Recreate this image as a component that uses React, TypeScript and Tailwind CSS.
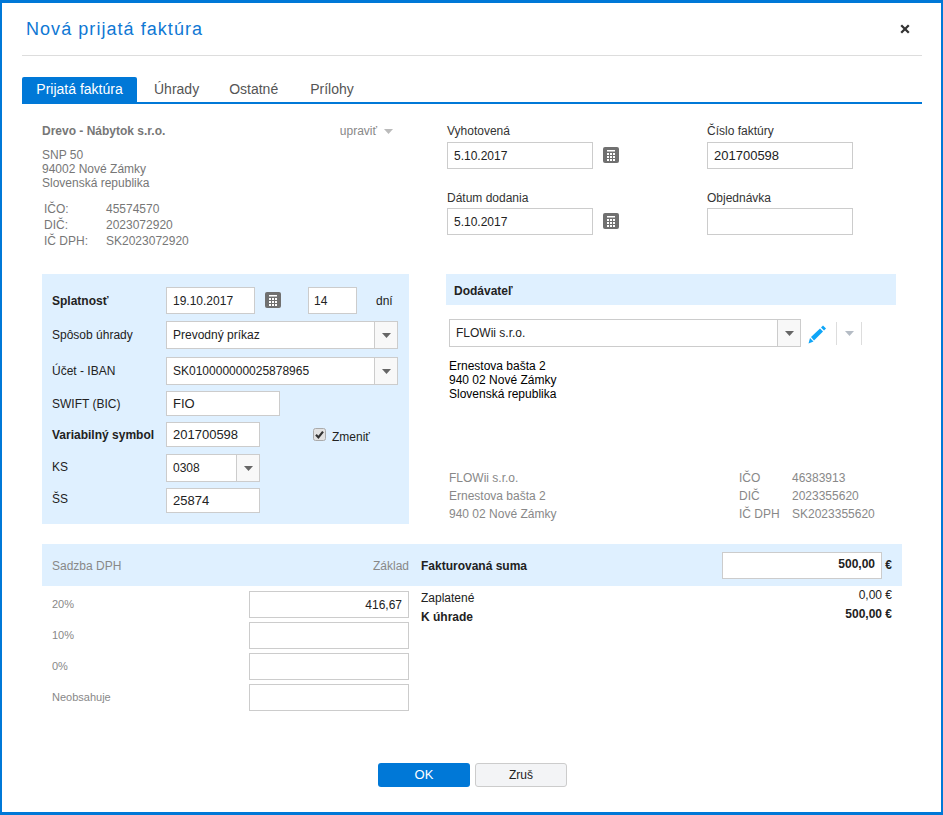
import React from "react";

function Caret({ className = "fill-[#666666]" }: { className?: string }) {
  return (
    <svg width="9" height="5" viewBox="0 0 9 5" className={className}>
      <polygon points="0,0 9,0 4.5,5" />
    </svg>
  );
}

function Calendar() {
  const cells: React.ReactNode[] = [];
  [6, 9, 12].forEach((y) =>
    [4, 7, 10].forEach((x) => cells.push(<rect key={`${x}-${y}`} x={x} y={y} width="2" height="2" fill="#fff" />))
  );
  return (
    <svg width="16" height="16" viewBox="0 0 16 16" className="mb-px block shrink-0">
      <rect width="16" height="16" rx="2" fill="#707070" />
      <rect x="4" y="3" width="8" height="1.5" fill="#fff" />
      {cells}
    </svg>
  );
}

function Field({ className, children }: { className: string; children?: React.ReactNode }) {
  return (
    <div className={`box-border flex shrink-0 items-center border border-[#cccccc] bg-white text-[#222222] ${className}`}>
      {children}
    </div>
  );
}

function Select({ className, arrow, label }: { className: string; arrow: string; label: string }) {
  return (
    <div className={`box-border flex shrink-0 items-stretch border border-[#cccccc] bg-white text-[12px] text-[#222222] ${className}`}>
      <div className="flex flex-1 items-center pl-[6px]">{label}</div>
      <div className={`flex items-center justify-center border-l border-[#cccccc] bg-[#f8f8f8] ${arrow}`}>
        <Caret />
      </div>
    </div>
  );
}

export default function App() {
  return (
    <div className="relative box-border h-[815px] w-[943px] overflow-hidden border-x-2 border-t-[3px] border-b-[3px] border-[#0078d7] bg-white font-[Liberation_Sans,Arial,sans-serif] text-[12px] text-[#333333]">
      <div className="absolute left-[24px] top-[13px] text-[18px] leading-[26px] tracking-[1.05px] text-[#0f78d4]">Nová prijatá faktúra</div>
      <svg width="10" height="10" viewBox="0 0 10 10" className="absolute left-[898px] top-[21px]">
        <path d="M1.2 1.2 8.8 8.8M8.8 1.2 1.2 8.8" stroke="#333333" strokeWidth="2.3" fill="none" />
      </svg>
      <div className="absolute left-[20px] top-[52px] h-px w-[900px] bg-[#dddddd]" />

      {/* Tabs */}
      <div className="absolute left-[20px] top-[74px] box-border flex h-[27px] w-[900px] items-start border-b-2 border-[#0078d7] text-[14px] text-[#555555]">
        <div className="flex h-[25px] w-[115px] items-center justify-center rounded-t-[2px] bg-[#0078d7] text-white">Prijatá faktúra</div>
        <div className="ml-[17px] flex h-[25px] items-center">Úhrady</div>
        <div className="ml-[30px] flex h-[25px] items-center">Ostatné</div>
        <div className="ml-[32px] flex h-[25px] items-center">Prílohy</div>
      </div>

      {/* Own company */}
      <div className="absolute left-[40px] top-[121px] w-[351px] text-[#777777]">
        <div className="flex h-[14px] items-center justify-between leading-[14px]">
          <span className="font-bold">Drevo - Nábytok s.r.o.</span>
          <span className="flex items-center gap-[7px] text-[#888888]">
            upraviť
            <Caret className="fill-[#bbbbbb]" />
          </span>
        </div>
        <div className="mt-[10px] leading-[14px]">
          <div>SNP 50</div>
          <div>94002 Nové Zámky</div>
          <div>Slovenská republika</div>
        </div>
        <div className="ml-[2px] mt-[11px] grid grid-cols-[62px_1fr] leading-[16px]">
          <span>IČO:</span><span>45574570</span>
          <span>DIČ:</span><span>2023072920</span>
          <span>IČ DPH:</span><span>SK2023072920</span>
        </div>
      </div>

      {/* Dates */}
      <div className="absolute left-[445px] top-[121px] grid grid-cols-[260px_146px] grid-rows-[66px_53px]">
        <div>
          <div className="h-[18px] leading-[14px]">Vyhotovená</div>
          <div className="flex items-center gap-[10px]">
            <Field className="h-[27px] w-[146px] pl-[6px]">5.10.2017</Field>
            <Calendar />
          </div>
        </div>
        <div>
          <div className="h-[18px] leading-[14px]">Číslo faktúry</div>
          <Field className="h-[27px] w-[146px] pl-[6px] text-[13px]">201700598</Field>
        </div>
        <div>
          <div className="h-[18px] pt-px leading-[14px]">Dátum dodania</div>
          <div className="flex items-center gap-[10px]">
            <Field className="h-[27px] w-[146px] pl-[6px]">5.10.2017</Field>
            <Calendar />
          </div>
        </div>
        <div>
          <div className="h-[18px] pt-px leading-[14px]">Objednávka</div>
          <Field className="h-[27px] w-[146px]" />
        </div>
      </div>

      {/* Payment panel */}
      <div className="absolute left-[40px] top-[271px] box-border flex h-[250px] w-[367px] flex-col bg-[#dff0ff] pl-[10px] pt-[13px] text-[#222222]">
        <div className="flex h-[27px] items-center">
          <span className="w-[114px] font-bold">Splatnosť</span>
          <Field className="h-[27px] w-[89px] pl-[6px]">19.10.2017</Field>
          <span className="ml-[10px]"><Calendar /></span>
          <Field className="ml-[27px] h-[27px] w-[49px] items-start pl-[5px] pt-[4px]">14</Field>
          <span className="ml-[19px]">dní</span>
        </div>
        <div className="mt-[7px] flex h-[28px] items-center">
          <span className="w-[114px]">Spôsob úhrady</span>
          <Select className="h-[28px] w-[232px]" arrow="w-[23px]" label="Prevodný príkaz" />
        </div>
        <div className="mt-[8px] flex h-[28px] items-center">
          <span className="w-[114px]">Účet - IBAN</span>
          <Select className="h-[28px] w-[232px]" arrow="w-[23px]" label="SK010000000025878965" />
        </div>
        <div className="mt-[6px] flex h-[25px] items-center">
          <span className="w-[114px]">SWIFT (BIC)</span>
          <Field className="h-[25px] w-[114px] pl-[6px] text-[13px]">FIO</Field>
        </div>
        <div className="mt-[6px] flex h-[25px] items-center">
          <span className="w-[114px] font-bold">Variabilný symbol</span>
          <Field className="h-[25px] w-[94px] pl-[6px] text-[13px]">201700598</Field>
          <svg width="13" height="13" viewBox="0 0 13 13" className="ml-[53px] shrink-0">
            <rect x="0.5" y="0.5" width="12" height="12" rx="2" fill="#e2e2e2" stroke="#aaaaaa" />
            <path d="M3 6.8 5.4 9.4 10 3.6" fill="none" stroke="#333333" strokeWidth="2.2" />
          </svg>
          <span className="ml-[6px] mt-[4px]">Zmeniť</span>
        </div>
        <div className="mt-[7px] flex h-[28px] items-center">
          <span className="w-[114px] pb-[3px]">KS</span>
          <Select className="h-[28px] w-[94px]" arrow="w-[23px]" label="0308" />
        </div>
        <div className="mt-[6px] flex h-[25px] items-center">
          <span className="w-[114px] pb-[3px]">ŠS</span>
          <Field className="h-[25px] w-[94px] pl-[6px] text-[13px]">25874</Field>
        </div>
      </div>

      {/* Supplier */}
      <div className="absolute left-[444px] top-[271px] w-[450px]">
        <div className="flex h-[31px] items-center bg-[#dff0ff] pl-[8px] pt-[3px] font-bold text-[#222222]">Dodávateľ</div>
        <div className="ml-[3px] mt-[14px] flex h-[28px] items-center">
          <Select className="h-[28px] w-[352px]" arrow="w-[23px]" label="FLOWii s.r.o." />
          <svg width="18" height="19" viewBox="0 0 18 19" className="ml-[7px] mt-[2px] shrink-0 fill-[#0ea5f7]">
            <polygon points="3,12 12,3.5 15,6.5 6,15.5" />
            <polygon points="0.5,18.5 2,13 5.5,16.5" />
            <polygon points="13,2.5 15,0.5 18,3.5 16,5.5" />
          </svg>
          <div className="ml-[10px] box-border flex h-[23px] w-[26px] items-center justify-center border-x border-[#dddddd]">
            <Caret className="fill-[#b5bcc5]" />
          </div>
        </div>
        <div className="ml-[3px] mt-[12px] leading-[14px] text-black">
          <div>Ernestova bašta 2</div>
          <div>940 02 Nové Zámky</div>
          <div>Slovenská republika</div>
        </div>
        <div className="ml-[3px] mt-[68px] grid grid-cols-[290px_53px_1fr] leading-[18px] text-[#888888]">
          <span>FLOWii s.r.o.</span><span>IČO</span><span>46383913</span>
          <span>Ernestova bašta 2</span><span>DIČ</span><span>2023355620</span>
          <span>940 02 Nové Zámky</span><span>IČ DPH</span><span>SK2023355620</span>
        </div>
      </div>

      {/* VAT bar */}
      <div className="absolute left-[40px] top-[541px] box-border flex h-[42px] w-[860px] items-center bg-[#dff0ff] pl-[10px] pr-[10px]">
        <span className="mt-[1px] w-[357px] text-[#888888]">
          <span className="flex justify-between">
            <span>Sadzba DPH</span>
            <span>Základ</span>
          </span>
        </span>
        <span className="ml-[12px] mt-[1px] w-[301px] font-bold text-[#222222]">Fakturovaná suma</span>
        <Field className="h-[27px] w-[160px] justify-end pb-[3px] pr-[6px] font-bold">500,00</Field>
        <span className="ml-auto font-bold text-[#222222]">€</span>
      </div>

      {/* VAT rows */}
      <div className="absolute left-[50px] top-[588px] grid w-[357px] grid-cols-[197px_160px] gap-y-[4px] text-[11px] text-[#888888]">
        <span className="flex items-center">20%</span>
        <Field className="h-[27px] w-[160px] justify-end pr-[6px] text-[12px]">416,67</Field>
        <span className="flex items-center">10%</span>
        <Field className="h-[27px] w-[160px]" />
        <span className="flex items-center">0%</span>
        <Field className="h-[27px] w-[160px]" />
        <span className="flex items-center">Neobsahuje</span>
        <Field className="h-[27px] w-[160px]" />
      </div>

      {/* Totals */}
      <div className="absolute left-[419px] top-[583px] w-[471px] text-[#222222]">
        <div className="flex h-[19px] justify-between">
          <span className="pt-[3px]">Zaplatené</span>
          <span>0,00 €</span>
        </div>
        <div className="flex h-[19px] justify-between font-bold">
          <span className="pt-[3px]">K úhrade</span>
          <span>500,00 €</span>
        </div>
      </div>

      {/* Buttons */}
      <div className="absolute left-[376px] top-[760px] flex gap-[5px]">
        <div className="flex h-[24px] w-[92px] items-center justify-center rounded-[3px] bg-[#0078d7] text-[13px] text-white">OK</div>
        <div className="box-border flex h-[24px] w-[92px] items-center justify-center rounded-[3px] border border-[#cccccc] bg-[#f3f4f6] text-[#222222]">Zruš</div>
      </div>
    </div>
  );
}
